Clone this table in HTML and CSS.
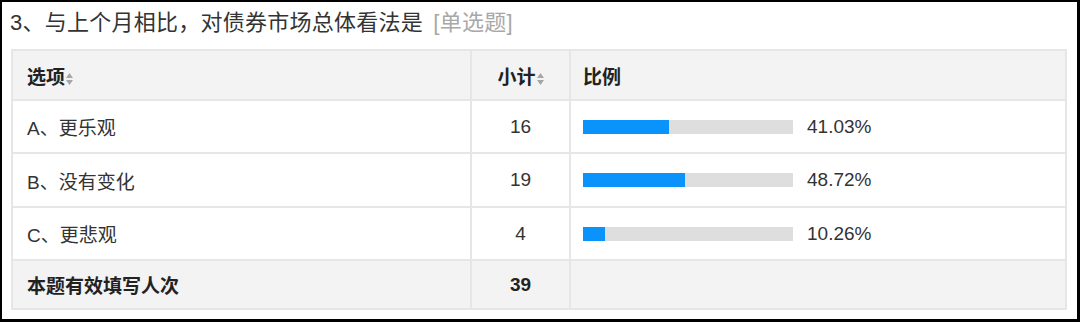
FILE: index.html
```html
<!DOCTYPE html>
<html lang="zh-CN">
<head>
<meta charset="utf-8">
<link rel="stylesheet" href="styles.css">
</head>
<body>
<div class="frame">
  <div class="title">3、与上个月相比，对债券市场总体看法是 <span class="qtype">[单选题]</span></div>
  <table class="stats">
    <colgroup><col class="c1"><col class="c2"><col class="c3"></colgroup>
    <thead>
      <tr class="head">
        <th class="opt">选项<span class="sort"><svg width="7" height="12" viewBox="0 0 7 12"><path d="M3.5 0 L7 5 L0 5Z M0 7 L7 7 L3.5 12Z" fill="#a6a6a6"/></svg></span></th>
        <th class="num">小计<span class="sort"><svg width="7" height="12" viewBox="0 0 7 12"><path d="M3.5 0 L7 5 L0 5Z M0 7 L7 7 L3.5 12Z" fill="#a6a6a6"/></svg></span></th>
        <th class="ratio">比例</th>
      </tr>
    </thead>
    <tbody>
      <tr class="r1">
        <td class="opt">A、更乐观</td>
        <td class="num">16</td>
        <td class="ratio"><div class="cell"><div class="bar"><div class="fill" style="width:41.03%"></div></div><span class="pct">41.03%</span></div></td>
      </tr>
      <tr class="r2">
        <td class="opt">B、没有变化</td>
        <td class="num">19</td>
        <td class="ratio"><div class="cell"><div class="bar"><div class="fill" style="width:48.72%"></div></div><span class="pct">48.72%</span></div></td>
      </tr>
      <tr class="r3">
        <td class="opt">C、更悲观</td>
        <td class="num">4</td>
        <td class="ratio"><div class="cell"><div class="bar"><div class="fill" style="width:10.26%"></div></div><span class="pct">10.26%</span></div></td>
      </tr>
      <tr class="foot">
        <td class="opt">本题有效填写人次</td>
        <td class="num">39</td>
        <td class="ratio"></td>
      </tr>
    </tbody>
  </table>
</div>
</body>
</html>
```

FILE: styles.css
```css
html, body {
  margin: 0;
  padding: 0;
  background: #fff;
}
body {
  font-family: "Liberation Sans", "Noto Sans CJK SC", sans-serif;
  color: #333;
}
.frame {
  width: 1080px;
  height: 322px;
  box-sizing: border-box;
  border-style: solid;
  border-color: #000;
  border-width: 2px 3px 3px 2px;
  padding: 6px 0 0 8px;
}
.title {
  font-size: 22px;
  line-height: 30px;
  height: 30px;
  color: #333;
  letter-spacing: 0.25px;
}
.qtype {
  color: #a8a8a8;
  margin-left: 4px;
}
.stats {
  margin-top: 11px;
  margin-left: 1px;
  width: 1056px;
  border-collapse: collapse;
  table-layout: fixed;
  font-size: 19px;
}
.c1 { width: 459px; }
.c2 { width: 99px; }
.c3 { width: auto; }
.stats th, .stats td {
  border: 2px solid #e6e6e6;
  padding: 0;
  vertical-align: middle;
}
.head th {
  background: #f3f3f3;
  height: 48px;
  font-weight: bold;
  text-align: left;
  color: #222;
}
.stats .opt { padding-left: 14px; }
.stats .num { text-align: center; }
.stats th.num { text-align: center; }
.stats .ratio { padding-left: 12px; }
.sort {
  display: inline-block;
  margin-left: 1px;
  vertical-align: -1px;
}
.sort svg { display: block; }
tbody td { height: 51px; }
.r2 td { height: 52px; }
.foot td {
  background: #f3f3f3;
  font-weight: bold;
  height: 47px;
  color: #222;
}
.cell {
  display: flex;
  align-items: center;
}
.bar {
  width: 210px;
  height: 14px;
  background: #dedede;
  flex: none;
}
.fill {
  height: 100%;
  background: #0a94fb;
}
.pct {
  margin-left: 14px;
}
```
